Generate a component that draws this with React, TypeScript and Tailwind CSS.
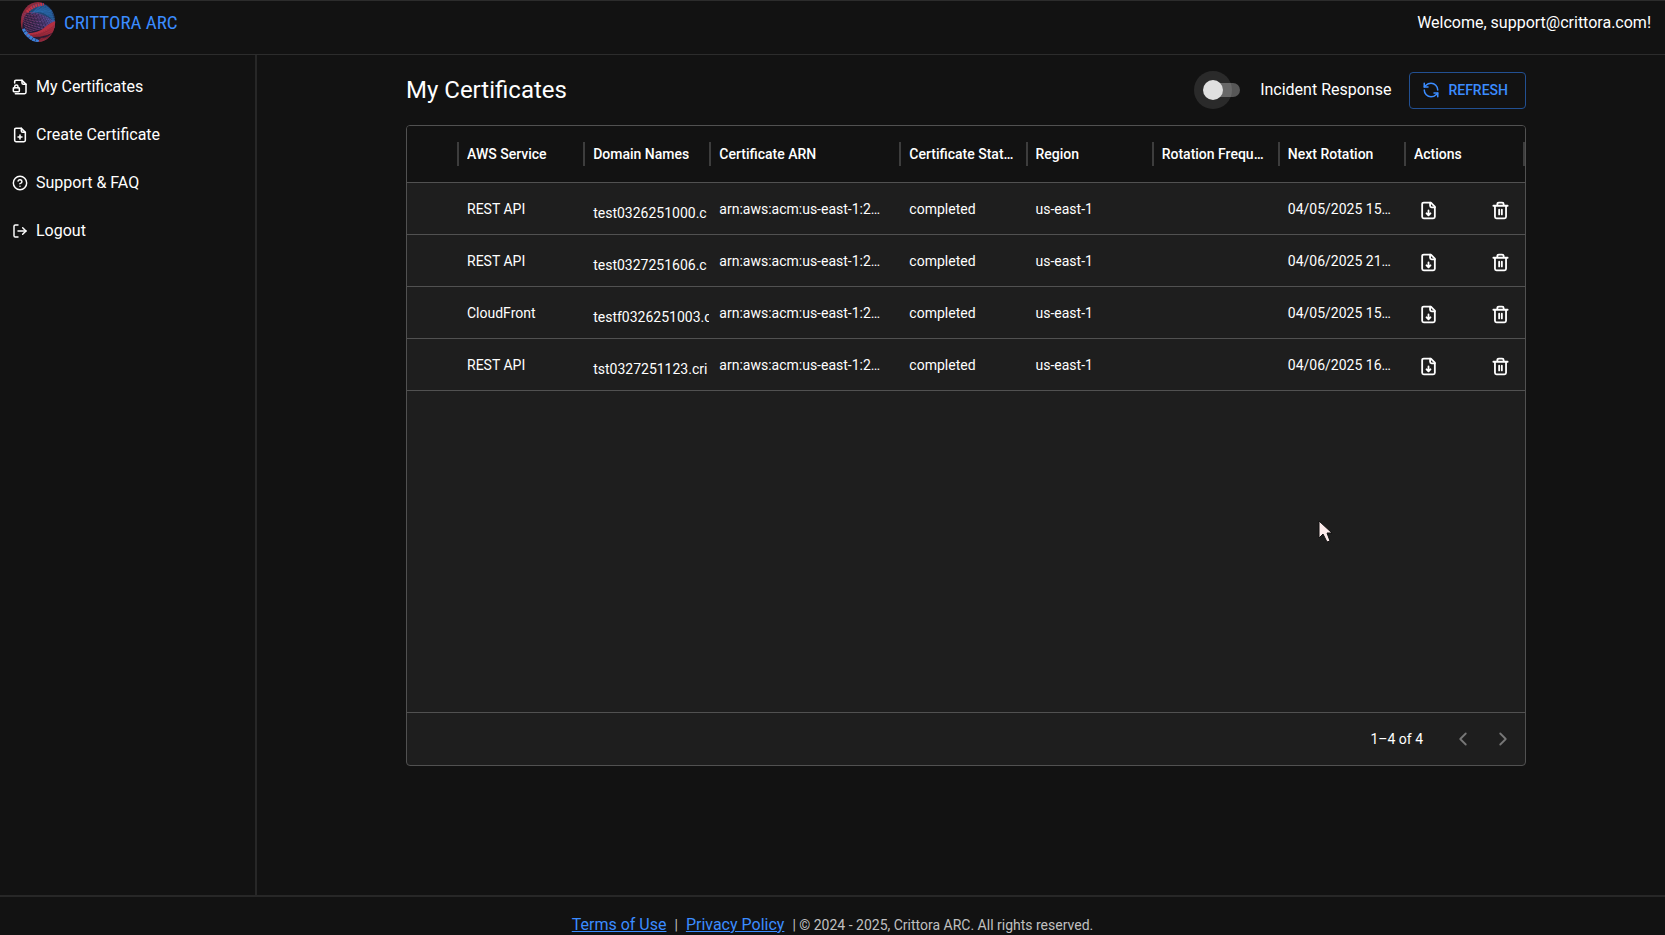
import type { ReactNode } from 'react';
import { ChevronLeft, ChevronRight, CircleHelp, LogOut, RefreshCcw } from 'lucide-react';

function Glyph({ size, children }: { size: number; children: ReactNode }) {
  return (
    <svg width={size} height={size} viewBox="0 0 24 24" fill="none" stroke="currentColor" strokeWidth="2.3" strokeLinecap="round" strokeLinejoin="round" aria-hidden="true">
      {children}
    </svg>
  );
}

const FileLock = () => (
  <Glyph size={16}>
    <path d="M4 6V4Q4 2 6 2H15L21 8V20Q21 22 19 22H5" />
    <path d="M15 2V6Q15 8 17 8H21" />
    <rect x="2" y="13" width="9" height="6" rx="1" />
    <path d="M4 13V11.5A2.5 2.5 0 0 1 9 11.5V13" />
  </Glyph>
);

const FileAdd = () => (
  <Glyph size={16}>
    <path d="M6 2H14L20 8V20Q20 22 18 22H6Q4 22 4 20V4Q4 2 6 2Z" />
    <path d="M14 2V6Q14 8 16 8H20M12 12V18M9 15H15" />
  </Glyph>
);

const FileDown = () => (
  <Glyph size={19}>
    <path d="M6 2H15L20 7V20Q20 22 18 22H6Q4 22 4 20V4Q4 2 6 2Z" />
    <path d="M14 2V6Q14 8 16 8H20M12 12V17.5M9.5 15.5L12 18L14.5 15.5" />
  </Glyph>
);

const Trash = () => (
  <Glyph size={19}>
    <path d="M3 6H21M5 6V20Q5 22 7 22H17Q19 22 19 20V6M8 6V4Q8 2 10 2H14Q16 2 16 4V6M10.3 11V17M13.7 11V17" />
  </Glyph>
);

const nav = [
  { label: 'My Certificates', icon: <FileLock /> },
  { label: 'Create Certificate', icon: <FileAdd /> },
  { label: 'Support & FAQ', icon: <CircleHelp size={16} strokeWidth={2.2} /> },
  { label: 'Logout', icon: <LogOut size={16} strokeWidth={2.2} /> },
];

const columns = ['AWS Service', 'Domain Names', 'Certificate ARN', 'Certificate Stat…', 'Region', 'Rotation Frequ…', 'Next Rotation', 'Actions'];

const rows = [
  { service: 'REST API', domain: 'test0326251000.c', next: '04/05/2025 15…' },
  { service: 'REST API', domain: 'test0327251606.c', next: '04/06/2025 21…' },
  { service: 'CloudFront', domain: 'testf0326251003.c', next: '04/05/2025 15…' },
  { service: 'REST API', domain: 'tst0327251123.cri', next: '04/06/2025 16…' },
];

const cell = 'truncate pt-0.5 pl-[10px] text-left';

function Logo() {
  const lines = Array.from({ length: 12 }, (_, i) => i);
  return (
    <svg className="h-[42px] w-9" viewBox="0 0 36 42" fill="none" aria-hidden="true">
      <defs>
        <clipPath id="globe"><ellipse cx="18" cy="21" rx="17.2" ry="20" /></clipPath>
        <linearGradient id="tone" x1="0" y1="0.4" x2="1" y2="0.6">
          <stop offset="0" stopColor="#8a3560" />
          <stop offset="0.5" stopColor="#6b4a94" />
          <stop offset="1" stopColor="#4a5fb4" />
        </linearGradient>
      </defs>
      <g clipPath="url(#globe)">
        <rect width="36" height="42" fill="#1c1c38" />
        <path d="M0 0H25Q14 5 6 13Q1 21 3 33L0 34Z" fill="#8e2a3b" />
        <path d="M13 4Q26 0 31 9L35 21Q25 12 9 12Z" fill="#1f4877" />
        {lines.map((i) => (
          <path key={i} d={`M${11 + i} ${13 - i}Q${22 + i} ${6 + i / 2} 35 ${21 - i}`} stroke="#3177c0" strokeWidth="0.6" strokeDasharray="2 0.7" />
        ))}
        {lines.map((i) => (
          <path key={i} d={`M${1 + i / 2} ${14 + i * 1.6}Q${14 + i} ${7 + i * 1.7} 35 ${21 + i / 2}`} stroke="url(#tone)" strokeWidth="0.9" strokeDasharray="2.5 0.5" />
        ))}
        <path d="M4 32Q17 33 24 27T36 20V29Q28 37 8 36Z" fill="#b22f41" />
        <path d="M16 42L21 37Q30 37 35 28V42Z" fill="#942a3b" />
        {lines.map((i) => (
          <path key={i} d={`M${8 + i} ${34 + i / 2}Q${22 + i} 35 36 ${23 + i * 1.2}`} stroke="#5c2030" strokeWidth="0.4" strokeDasharray="1.5 1" />
        ))}
        <path d="M3 28Q8 37 19 41" stroke="#3b7fd6" strokeWidth="3.5" strokeDasharray="3 0.5" />
        <path d="M7 11Q13 4 24 3" stroke="#c33447" strokeWidth="3" strokeDasharray="2 0.6" />
      </g>
    </svg>
  );
}

export default function App() {
  return (
    <div className="flex min-h-screen flex-col bg-[#121212] font-['Roboto',sans-serif] text-white">
      <header className="flex h-[55px] shrink-0 items-start justify-between border-t border-b border-[#2c2c2c] pr-[14px] pl-5">
        <a href="#home" className="flex items-center gap-2 font-['Liberation_Sans_Narrow','Roboto_Condensed','Lato',sans-serif] text-[19px] text-[#3b8cff]">
          <Logo />
          <span className="pt-0.5">CRITTORA ARC</span>
        </a>
        <p className="pt-[10px] text-base leading-6">Welcome, support@crittora.com!</p>
      </header>

      <div className="flex grow">
        <nav className="w-[257px] shrink-0 border-r-2 border-[#272727] pt-2">
          {nav.map(({ label, icon }) => (
            <a key={label} href="#nav" className="flex h-12 items-center gap-2 px-3 text-base">
              {icon}
              {label}
            </a>
          ))}
        </nav>

        <main className="min-w-0 grow pt-4 pr-[138px] pl-[148px]">
          <div className="mx-auto w-full max-w-[1120px]">
            <div className="flex h-[38px] items-center">
              <h1 className="text-2xl">My Certificates</h1>
              <label className="ml-auto flex items-center gap-5 text-base">
                <span className="relative flex h-[38px] w-[46px] items-center">
                  <input type="checkbox" role="switch" className="peer sr-only" />
                  <span className="ml-3 h-[14px] w-[34px] rounded-full bg-[#575757]" />
                  <span className="absolute left-0 flex size-[38px] items-center justify-center rounded-full bg-white/10">
                    <span className="size-5 rounded-full bg-[#e0e0e0]" />
                  </span>
                </span>
                Incident Response
              </label>
              <button className="ml-[18px] flex h-[37px] items-center gap-2 rounded border border-[#225092] pr-[17px] pl-3 text-sm font-medium text-[#3b8cff]">
                <RefreshCcw size={18} />
                REFRESH
              </button>
            </div>

            <section className="mt-4 flex h-[641px] flex-col overflow-hidden rounded border border-[#515151] bg-[#1e1e1e] text-sm">
              <table className="w-full table-fixed border-collapse">
                <colgroup>
                  <col className="w-[50px]" />
                  <col /><col />
                  <col className="w-[17%]" />
                  <col /><col /><col /><col />
                  <col className="w-[121px]" />
                </colgroup>
                <thead className="bg-[#121212]">
                  <tr className="h-[56px] border-b border-[#515151]">
                    <td />
                    {columns.map((c) => (
                      <th key={c} scope="col" className="group p-0 text-left font-medium">
                        <div className="flex h-6 items-center border-l-2 border-[#3d3d3d] pl-2 group-last:border-r-2">
                          <span className="truncate">{c}</span>
                        </div>
                      </th>
                    ))}
                  </tr>
                </thead>
                <tbody>
                  {rows.map((r) => (
                    <tr key={r.domain} className="h-[52px] border-b border-[#515151]">
                      <td />
                      <td className={cell}>{r.service}</td>
                      <td className="overflow-hidden pt-[10px] pl-[10px] text-left whitespace-nowrap">{r.domain}</td>
                      <td className={cell}>arn:aws:acm:us-east-1:2…</td>
                      <td className={cell}>completed</td>
                      <td className={cell}>us-east-1</td>
                      <td />
                      <td className={cell}>{r.next}</td>
                      <td>
                        <div className="flex items-center justify-between px-[15px] pt-1">
                          <button aria-label="Download"><FileDown /></button>
                          <button aria-label="Delete"><Trash /></button>
                        </div>
                      </td>
                    </tr>
                  ))}
                </tbody>
              </table>
              <div className="mt-auto flex h-[53px] items-center justify-end border-t border-[#515151] pr-[11px]">
                <span className="mr-[29px]">1–4 of 4</span>
                <button disabled aria-label="Previous page" className="text-[#777777]"><ChevronLeft size={22} /></button>
                <button disabled aria-label="Next page" className="ml-[18px] text-[#777777]"><ChevronRight size={22} /></button>
              </div>
            </section>
          </div>
        </main>
      </div>

      <footer className="flex h-10 shrink-0 items-baseline justify-center border-t-2 border-[#272727] pt-[18px] text-sm leading-5 text-[#c0c0c0]">
        <a href="#terms" className="text-base leading-5 text-[#3b8cff] underline">Terms of Use</a>
        <span className="mx-2">|</span>
        <a href="#privacy" className="text-base leading-5 text-[#3b8cff] underline">Privacy Policy</a>
        <span className="ml-2">| © 2024 - 2025, Crittora ARC. All rights reserved.</span>
      </footer>

      <svg className="pointer-events-none absolute top-[520px] left-[1318px]" width="15" height="24" viewBox="0 0 15 24" aria-hidden="true">
        <path d="M1 1V18L5 14L9 22L12 21L9 13H14Z" fill="#fdecec" stroke="#111111" />
      </svg>
    </div>
  );
}
